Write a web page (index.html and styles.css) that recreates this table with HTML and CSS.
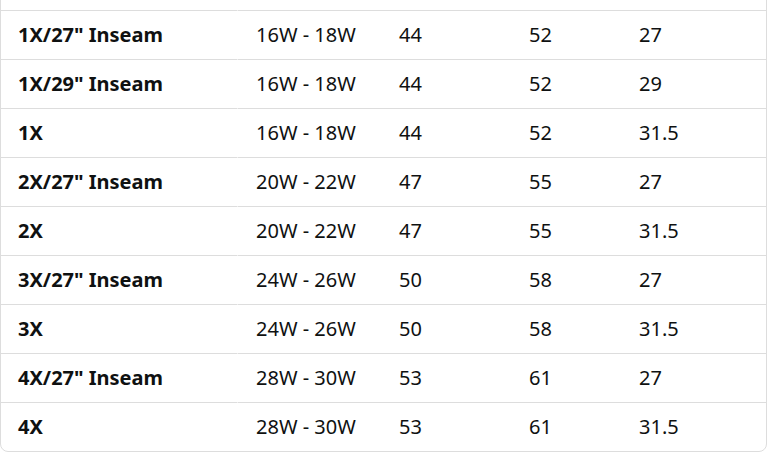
FILE: index.html
```html
<!DOCTYPE html>
<html lang="en">
<head>
<meta charset="utf-8">
<title>Size chart</title>
<link rel="stylesheet" href="styles.css">
</head>
<body>
<div class="card">
  <table class="chart">
    <colgroup>
      <col class="c1"><col class="c2"><col class="c3"><col class="c4"><col class="c5">
    </colgroup>
    <thead>
      <tr class="head"><th></th><th></th><th></th><th></th><th></th></tr>
    </thead>
    <tbody>
      <tr><td>1X/27" Inseam</td><td>16W - 18W</td><td>44</td><td>52</td><td>27</td></tr>
      <tr><td>1X/29" Inseam</td><td>16W - 18W</td><td>44</td><td>52</td><td>29</td></tr>
      <tr><td>1X</td><td>16W - 18W</td><td>44</td><td>52</td><td>31.5</td></tr>
      <tr><td>2X/27" Inseam</td><td>20W - 22W</td><td>47</td><td>55</td><td>27</td></tr>
      <tr><td>2X</td><td>20W - 22W</td><td>47</td><td>55</td><td>31.5</td></tr>
      <tr><td>3X/27" Inseam</td><td>24W - 26W</td><td>50</td><td>58</td><td>27</td></tr>
      <tr><td>3X</td><td>24W - 26W</td><td>50</td><td>58</td><td>31.5</td></tr>
      <tr><td>4X/27" Inseam</td><td>28W - 30W</td><td>53</td><td>61</td><td>27</td></tr>
      <tr><td>4X</td><td>28W - 30W</td><td>53</td><td>61</td><td>31.5</td></tr>
    </tbody>
  </table>
</div>
</body>
</html>
```
FILE: styles.css
```css
html, body {
  margin: 0;
  padding: 0;
  background: #fff;
}
body {
  font-family: "Noto Sans", "Open Sans", sans-serif;
  color: #0f1111;
}
.card {
  width: 767px;
  box-sizing: border-box;
  margin-top: -39px;
  border: 1px solid #dddddd;
  border-radius: 8px;
  overflow: hidden;
}
.chart {
  width: 765px;
  table-layout: fixed;
  border-collapse: separate;
  border-spacing: 0;
  font-size: 20px;
}
.c1 { width: 237px; }
.c2 { width: 143px; }
.c3 { width: 130px; }
.c4 { width: 110px; }
.c5 { width: 145px; }
.chart th,
.chart td {
  box-sizing: border-box;
  padding: 10px 18px;
  line-height: 28px;
  text-align: left;
  white-space: nowrap;
  border-bottom: 1px solid #dddddd;
  font-weight: 400;
}
.chart .head th {
  height: 49px;
}
.chart th:first-child,
.chart td:first-child {
  padding-left: 17px;
  font-weight: 700;
  border-right: 1px solid #ffffff;
}
.chart tbody tr:last-child td {
  border-bottom: none;
}
```
